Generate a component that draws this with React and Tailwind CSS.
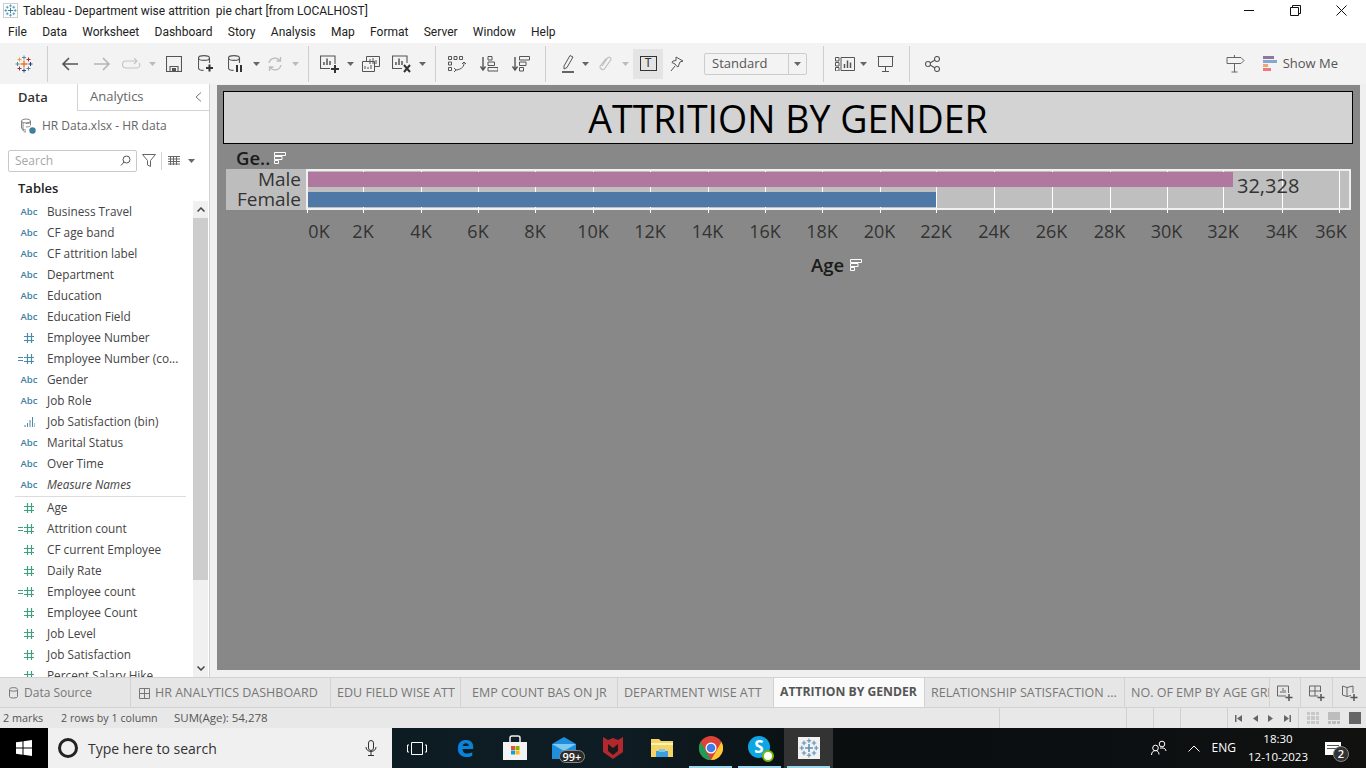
import React from "react";

const S = ({ w = 24, h = 24, vb, children, className = "", stroke = "#555", sw = 1.3, fill = "none" }) => (
  <svg width={w} height={h} viewBox={vb || `0 0 ${w} ${h}`} fill={fill} stroke={stroke} strokeWidth={sw} className={"block shrink-0 " + className}>{children}</svg>
);
const Sep = () => <div className="w-px h-[36px] bg-[#cfcfcf] shrink-0" />;
const Caret = ({ c = "#666" }) => <S w={7} h={4} stroke="none" fill={c}><path d="M0 0h7L3.500 4z" /></S>;
const Slot = ({ className, children }) => <div className={"flex items-center justify-center h-full shrink-0 " + className}>{children}</div>;

function Cross({ size = 16, c = "#5b8fb5", multi = false }) {
  const col = (a) => (multi ? a : c);
  const x = (cx, cy, r, color, k) => (
    <path key={k} d={`M${cx - r} ${cy}H${cx + r}M${cx} ${cy - r}V${cy + r}`} stroke={color} strokeWidth={r > 2 ? 1.4 : 1} fill="none" />
  );
  return (
    <svg width={size} height={size} viewBox="0 0 18 18" className="block shrink-0">
      {x(9, 9, 3.5, col("#e8762b"), 1)}
      {x(9, 2.5, 2, col("#5b879b"), 2)}
      {x(9, 15.5, 2, col("#1f4f7b"), 3)}
      {x(2.5, 9, 2, col("#59879b"), 4)}
      {x(15.5, 9, 2, col("#1f447c"), 5)}
      {x(4.5, 4.5, 2, col("#e8a33c"), 6)}
      {x(13.5, 4.5, 2, col("#c72035"), 7)}
      {x(4.5, 13.5, 2, col("#b0263d"), 8)}
      {x(13.5, 13.5, 2, col("#5a7d9a"), 9)}
    </svg>
  );
}

const menus = ["File", "Data", "Worksheet", "Dashboard", "Story", "Analysis", "Map", "Format", "Server", "Window", "Help"];

function Toolbar() {
  return (
    <div className="h-[41px] bg-[#f3f3f3] flex items-center shrink-0">
      <Slot className="w-[47px]"><Cross size={18} multi /></Slot>
      <Sep />
      <Slot className="ml-[6px] w-[32px]"><S w={18} h={16} stroke="#555" sw={1.6}><path d="M17 8H2M8 2L2 8l6 6" /></S></Slot>
      <Slot className="w-[32px]"><S w={18} h={16} stroke="#b5b5b5" sw={1.6}><path d="M1 8h15M10 2l6 6-6 6" /></S></Slot>
      <Slot className="w-[28px]"><S w={20} h={12} stroke="#c4c4c4" sw={1.1}><path d="M14 3H4a3 3 0 0 0 0 7h11a3 3 0 0 0 2-5M12 0l3 3-3 3" /></S></Slot>
      <Slot className="w-[12px]"><Caret c="#bbb" /></Slot>
      <Slot className="w-[32px]"><S w={16} h={16} sw={1.1}><path d="M.5.500h15v15H.5zM4 15.500v-5h8v5" /><path d="M6 12h4v3H6z" fill="#555" stroke="none" /></S></Slot>
      <Slot className="w-[31px]"><S w={16} h={18} sw={1.1}><ellipse cx="6" cy="3" rx="5.5" ry="2.4" /><path d="M.5 3v10c0 1.400 2 2.400 5 2.400M11.500 3v5" /><path d="M11.500 9.500v7M8 13h7" stroke="#333" strokeWidth="2" /></S></Slot>
      <Slot className="w-[30px]"><S w={16} h={18} sw={1.1}><ellipse cx="6" cy="3" rx="5.5" ry="2.4" /><path d="M.5 3v10c0 1.400 2 2.400 5 2.400M11.500 3v5" /><path d="M9 10v7M13 10v7" stroke="#333" strokeWidth="2" /></S></Slot>
      <Slot className="w-[10px]"><Caret /></Slot>
      <Slot className="w-[28px]"><S w={16} h={16} stroke="#bdbdbd" sw={1.3}><path d="M2 7a6 6 0 0 1 11-2M14 9a6 6 0 0 1-11 2M13.500 1v4h-4M2.500 15v-4h4" /></S></Slot>
      <Slot className="w-[12px]"><Caret c="#bbb" /></Slot>
      <div className="ml-[7px]"><Sep /></div>
      <Slot className="ml-[6px] w-[30px]"><S w={20} h={18} sw={1.1}><path d="M10 13.500H.5V1h14.500v8" /><path d="M4 10V7M7 10V3.500M10 10V6" strokeWidth="1.500" /><path d="M15 10v8M11 14h8" stroke="#333" strokeWidth="2" /></S></Slot>
      <Slot className="w-[10px]"><Caret /></Slot>
      <Slot className="w-[32px]"><S w={18} h={16} sw={1}><path d="M4.500 5V.5h13v10H13M.5 5.500h12v10H.5z" /><path d="M8 8V3M11 8V2M14 8V4M3 13v-3M6 13v-2M9 13V9" /></S></Slot>
      <Slot className="w-[30px]"><S w={20} h={18} sw={1.1}><path d="M10 13.500H.5V1h14.500v7" /><path d="M4 10V7M7 10V3.500M10 10V6" strokeWidth="1.500" /><path d="M12 10l6 7M18 10l-6 7" stroke="#333" strokeWidth="2" /></S></Slot>
      <Slot className="w-[10px]"><Caret /></Slot>
      <div className="ml-[8px]"><Sep /></div>
      <Slot className="ml-[5px] w-[32px]"><S w={18} h={16} sw={1}><path d="M.5.500h3v3h-3zM6 .5h3v3H6zM11.500.5h3v3h-3zM.5 6h3v3h-3zM.5 11.500h3v3h-3z" /><path d="M16 6c.5 4-2 7.500-8 8M6 12l2 2-2 2M14 8l2-2 2 2" /></S></Slot>
      <Slot className="w-[32px]"><S w={18} h={16} sw={1}><path d="M3 1v12M.5 10.500L3 14l2.500-3.500" strokeWidth="1.400" /><path d="M8 .5h4v3.500H8zM8 6h6.500v3.500H8zM8 11.500h10V15H8z" /></S></Slot>
      <Slot className="w-[32px]"><S w={18} h={16} sw={1}><path d="M3 1v12M.5 10.500L3 14l2.500-3.500" strokeWidth="1.400" /><path d="M7.500.5h10V4h-10zM7.500 6H14v3.500H7.500zM7.500 11.500h4V15h-4z" /></S></Slot>
      <div className="ml-[8px]"><Sep /></div>
      <Slot className="ml-[10px] w-[24px]"><S w={14} h={19} sw={1}><path d="M3 12L9 1.500l3 1.500-6 10.500-3 1.500z" /><path d="M1 18h12" stroke="#555" strokeWidth="1.800" /></S></Slot>
      <Slot className="w-[10px]"><Caret /></Slot>
      <Slot className="w-[30px]"><S w={13} h={18} stroke="#c0c0c0" sw={1.2}><path d="M3 11l6-8.500a2 2 0 0 1 3 2l-7 10a3 3 0 0 1-4-3l6-8" /></S></Slot>
      <Slot className="w-[10px]"><Caret c="#bbb" /></Slot>
      <Slot className="ml-[3px] w-[30px] !h-[30px] bg-[#e4e4e4]">
        <div className="w-[17px] h-[15px] border border-[#333] flex items-center justify-center font-['Liberation_Mono'] text-[12px] leading-none text-[#333]">T</div>
      </Slot>
      <Slot className="w-[28px]"><S w={14} h={16} sw={1}><path d="M6 1l7 4-3 1-2 5-1.500-1L5 8 2 6.500 3 5l3-.5zM5 10l-4 5" /></S></Slot>
      <div className="ml-[13px] w-[103px] h-[22px] border border-[#cccccc] rounded-[2px] flex items-center shrink-0">
        <div className="flex-1 pl-[7px] text-[13px] text-[#555]">Standard</div>
        <div className="w-[18px] h-full border-l border-[#cccccc] flex items-center justify-center"><Caret /></div>
      </div>
      <div className="ml-[16px]"><Sep /></div>
      <Slot className="ml-[8px] w-[26px]"><S w={20} h={14} sw={1}><path d="M.5.500h3.500v3.500H.5zM.5 5.500h3.500V9H.5zM.5 10.500h3.500V14H.5zM6 .5h13.500V13.500H6z" /><path d="M9.500 11V7M12.500 11V3.500M15.500 11V5.500" strokeWidth="1.500" /></S></Slot>
      <Slot className="w-[10px]"><Caret /></Slot>
      <Slot className="w-[34px]"><S w={17} h={16} sw={1}><path d="M.5.500h16M1.500.5v10h14V.5M8.500 10.500v5M5 15.500h7" /></S></Slot>
      <div className="ml-[7px]"><Sep /></div>
      <Slot className="ml-[6px] w-[32px]"><S w={15} h={16} sw={1.1}><circle cx="3" cy="8" r="2.500" /><circle cx="12" cy="3" r="2.500" /><circle cx="12" cy="13" r="2.500" /><path d="M5 7l5-3M5 9l5 3" /></S></Slot>
      <div className="ml-auto w-[24px] flex justify-center"><S w={19} h={19} stroke="#666" sw={1}><path d="M1 3.500h14l3 3-3 3H1zM8.500 1v2.500M8.500 9.500V18M5.500 18h6" /></S></div>
      <div className="ml-[15px] flex flex-col gap-px w-[14px] shrink-0">
        <div className="w-[11px] h-[3px] bg-[#8d77a0]" />
        <div className="w-[14px] h-[3px] bg-[#85a8cf]" />
        <div className="w-[5px] h-[3px] bg-[#f0a673]" />
        <div className="w-[8px] h-[3px] bg-[#f3757f]" />
      </div>
      <div className="ml-[6px] mr-[28px] text-[13px] text-[#555]">Show Me</div>
    </div>
  );
}

const Hash = ({ c }) => (
  <S w={10} h={10} stroke={c} sw={1.2}><path d="M3.500 0v10M7.500 0v10M0 3.500h10M0 7.500h10" /></S>
);
const Icon = ({ kind, measure }) => {
  const c = measure ? "#3fa07f" : "#4a8ba8";
  if (kind === "abc") return <span className="text-[9.5px] font-semibold text-[#3f7f9f] leading-none">Abc</span>;
  if (kind === "hash") return <Hash c={c} />;
  if (kind === "calc")
    return (
      <div className="flex items-center gap-px -ml-[6px]">
        <S w={5} h={4} stroke={c} sw={1}><path d="M0 .5h5M0 3.500h5" /></S>
        <Hash c={c} />
      </div>
    );
  return <S w={11} h={10} stroke="#4c8aa6" sw={1}><path d="M1 10V8M3.500 10V6M6 10V3M8.500 10V0M11 10V6" /></S>;
};

const dims = [
  ["abc", "Business Travel"], ["abc", "CF age band"], ["abc", "CF attrition label"], ["abc", "Department"],
  ["abc", "Education"], ["abc", "Education Field"], ["hash", "Employee Number"], ["calc", "Employee Number (co..."],
  ["abc", "Gender"], ["abc", "Job Role"], ["bin", "Job Satisfaction (bin)"], ["abc", "Marital Status"],
  ["abc", "Over Time"], ["abc", "Measure Names", true],
];
const meas = [
  ["hash", "Age"], ["calc", "Attrition count"], ["hash", "CF current Employee"], ["hash", "Daily Rate"],
  ["calc", "Employee count"], ["hash", "Employee Count"], ["hash", "Job Level"], ["hash", "Job Satisfaction"], ["hash", "Percent Salary Hike"],
];
const Row = ({ kind, label, italic, measure }) => (
  <div className="h-[21px] flex items-center shrink-0">
    <div className="w-[47px] pl-[11px] flex justify-center items-center shrink-0"><Icon kind={kind} measure={measure} /></div>
    <div className={"text-[11.8px] text-[#444] whitespace-nowrap " + (italic ? "italic" : "")}>{label}</div>
  </div>
);

function Sidebar() {
  return (
    <div className="w-[210px] shrink-0 bg-white border-r border-[#d0d0d0] flex flex-col overflow-hidden">
      <div className="h-[27px] flex shrink-0">
        <div className="w-[77px] pl-[18px] flex items-center text-[13px] font-semibold text-[#333]">Data</div>
        <div className="flex-1 border-l border-b border-[#d4d4d4] flex items-center pl-[12px] text-[13px] text-[#666]">
          Analytics
          <S w={7} h={10} stroke="#777" sw={1} className="ml-auto mr-[7px]"><path d="M6 .5L1 5l5 4.500" /></S>
        </div>
      </div>
      <div className="h-[29px] flex items-center pl-[20px] shrink-0">
        <S w={16} h={16} stroke="#777" sw={0.9}><ellipse cx="6" cy="3" rx="4.500" ry="2" /><path d="M1.500 3v7c0 1 2 2 4.500 2M10.500 3v4M3 5v7c0 1 1 2 3 2M6 5.500c2 0 4.500-.5 4.500-1.500M6 9c2 0 3-.5 4.500-1" /><circle cx="12.500" cy="12.500" r="3.200" fill="#3f7f9e" stroke="none" /></S>
        <span className="ml-[6px] text-[12px] text-[#666]">HR Data.xlsx - HR data</span>
      </div>
      <div className="mt-[10px] h-[21px] flex items-center pl-[8px] shrink-0">
        <div className="w-[129px] h-[22px] border border-[#c9c9c9] rounded-[2px] flex items-center pl-[6px] pr-[5px] text-[12px] text-[#a8a8a8]">
          Search
          <S w={11} h={11} stroke="#555" sw={1} className="ml-auto"><circle cx="6.500" cy="4.500" r="3.500" /><path d="M4 7L1 10.500" /></S>
        </div>
        <S w={14} h={13} stroke="#666" sw={1} className="ml-[5px]"><path d="M.5.500h13L8.500 6.500V12.500L5.500 11V6.500z" /></S>
        <div className="ml-[5px] w-px h-[18px] bg-[#d4d4d4]" />
        <S w={12} h={9} stroke="#666" sw={1} className="ml-[6px]"><path d="M0 .5h12M0 3h12M0 5.500h12M0 8h12M2.500 0v9M5.500 0v9M8.500 0v9" /></S>
        <div className="ml-[8px]"><Caret /></div>
      </div>
      <div className="mt-[7px] h-[20px] pl-[18px] pt-px flex items-center text-[13px] font-semibold text-[#222] shrink-0">Tables</div>
      <div className="flex-1 flex min-h-0 mt-[3px]">
        <div className="w-[193px] flex flex-col shrink-0 overflow-hidden">
          {dims.map(([k, l, it]) => <Row key={l} kind={k} label={l} italic={it} />)}
          <div className="h-[2px] ml-[15px] mr-[7px] border-b border-[#dcdcdc] shrink-0" />
          {meas.map(([k, l]) => <Row key={l} kind={k} label={l} measure />)}
        </div>
        <div className="w-[15px] bg-[#f0f0f0] flex flex-col shrink-0">
          <div className="h-[17px] flex items-center justify-center shrink-0"><S w={8} h={5} stroke="#444" sw={1.5}><path d="M.5 4.500L4 1l3.500 3.500" /></S></div>
          <div className="h-[362px] bg-[#cdcdcd] shrink-0" />
          <div className="mt-auto h-[17px] flex items-center justify-center"><S w={8} h={5} stroke="#444" sw={1.5}><path d="M.5.500L4 4l3.500-3.500" /></S></div>
        </div>
      </div>
    </div>
  );
}

const SortIcon = ({ c = "#fff" }) => (
  <S w={12} h={12} stroke={c} sw={1}><path d="M.5.500h11v3H.5zM.5 4.500h7.500v3H.5zM.5 8.500h4v3h-4z" /></S>
);

const ticks = [0.5, 57, 115, 172, 229, 287, 344, 401.5, 459, 516, 573.5, 630, 688, 745.5, 803.5, 860.5, 917, 975.5, 1032.5];
const labels = ticks.map((t, i) => ({ t: i === 0 ? 13 : i === 18 ? 1025 : t, s: `${i * 2}K` }));
const bars = [
  { v: 32328, c: "bg-[#b0779f]" },
  { v: 21950, c: "bg-[#4e79a7]" },
];

function Canvas() {
  return (
    <div className="w-[1143px] h-[585px] bg-[#888888] mt-px shrink-0 pl-[6px] pt-[6px] font-['Open_Sans']">
      <div className="w-[1130px] h-[53px] bg-[#d3d3d3] border border-black flex items-center justify-center text-[37.5px] leading-none text-black pt-[2px]">
        ATTRITION BY GENDER
      </div>
      <div className="h-[25px] pt-[3px] pl-[13px] flex items-center gap-[4px]">
        <span className="text-[18.5px] leading-[20px] font-semibold text-[#1a1a1a]">Ge..</span>
        <SortIcon />
      </div>
      <div className="flex ml-[3px]">
        <div className="w-[80px] h-[41px] bg-[#bdbdbd] flex flex-col items-end pr-[5px] text-[19px] leading-[20px] text-[#333] shrink-0">
          <div>Male</div>
          <div>Female</div>
        </div>
        <div className="relative w-[1045px] h-[41px] bg-[#bfbfbf] border-2 border-[#f0f0f0] pt-px flex flex-col gap-[5px]">
          {ticks.slice(1).map((t) => (
            <div key={t} className="absolute top-0 h-[37px] w-px bg-white" style={{ left: t - 2 }} />
          ))}
          {bars.map((b) => (
            <div key={b.v} className={"relative h-[15px] " + b.c} style={{ width: b.v * 0.0286 }} />
          ))}
          <div className="absolute left-[929px] top-[3px] text-[20px] leading-[24px] text-[#333]">32,328</div>
        </div>
      </div>
      <div className="relative ml-[83px] w-[1045px] h-[45px]">
        {ticks.map((t) => (
          <div key={t} className="absolute top-0 h-[3px] w-px bg-white" style={{ left: t }} />
        ))}
        {labels.map((l) => (
          <div key={l.s} className="absolute top-[9px] -translate-x-1/2 text-[18px] leading-[24px] text-[#333]" style={{ left: l.t }}>{l.s}</div>
        ))}
      </div>
      <div className="ml-[588px] flex items-center gap-[6px]">
        <span className="text-[18.5px] leading-[20px] font-semibold text-[#1a1a1a]">Age</span>
        <SortIcon />
      </div>
    </div>
  );
}

const tabs = [
  { l: "Data Source", w: "w-[131px]", pre: "db", pl: "pl-[9px] text-[12px] gap-[6px] pt-px" },
  { l: "HR ANALYTICS DASHBOARD", w: "w-[200px]", pre: "grid", pl: "pl-[8px] gap-[5px] pt-px" },
  { l: "EDU FIELD WISE ATT", w: "w-[130px]", pl: "pl-[6px] pt-px" },
  { l: "EMP COUNT BAS ON JR", w: "w-[157px]", pl: "pl-[11px] pt-px" },
  { l: "DEPARTMENT WISE ATT", w: "w-[156px]", pl: "pl-[6px] pt-px" },
  { l: "ATTRITION BY GENDER", w: "w-[151px]", pl: "pl-[6px]", active: true },
  { l: "RELATIONSHIP SATISFACTION ...", w: "w-[200px]", pl: "pl-[6px] pt-px" },
  { l: "NO. OF EMP BY AGE GRP", w: "w-[145px]", pl: "pl-[6px] pt-px" },
];

function Tabs() {
  return (
    <div className="h-[31px] bg-[#e6e6e6] border-y border-[#d2d2d2] flex shrink-0 text-[12.5px] text-[#777] font-['Open_Sans']">
      {tabs.map((t) => (
        <div key={t.l} className={`${t.w} ${t.pl} shrink-0 overflow-hidden whitespace-nowrap flex items-center border-r border-[#d2d2d2] ${t.active ? "bg-[#fafafa] font-bold text-[#555] !text-[12.2px]" : ""}`}>
          {t.pre === "db" && <S w={9} h={12} stroke="#777" sw={1}><path d="M.5 2.500v7c0 2 8 2 8 0v-7c0-2.500-8-2.500-8 0zM.5 3c0 1.500 8 1.500 8 0" /></S>}
          {t.pre === "grid" && <S w={11} h={11} stroke="#777" sw={1}><path d="M.5.500h10v10H.5zM5.500.5v10M.5 5.500h10" /></S>}
          {t.l}
        </div>
      ))}
      <Slot className="w-[31px] border-r border-[#d2d2d2]"><S w={16} h={16} stroke="#666" sw={1}><path d="M9 11H.5V1h11v7M4 8V6M6 8V3M8 8V5" /><path d="M12 9v7M8.500 12.500h7" stroke="#555" strokeWidth="1.500" /></S></Slot>
      <Slot className="w-[32px] border-r border-[#d2d2d2]"><S w={16} h={16} stroke="#666" sw={1}><path d="M9 11H.5V1h11v6M.5 6h11M6 1v10" /><path d="M12 9v7M8.500 12.500h7" stroke="#555" strokeWidth="1.500" /></S></Slot>
      <Slot className="flex-1"><S w={16} h={16} stroke="#666" sw={1}><path d="M.5 1L5 2.500 11 1v7M.5 1v9L5 11.500l4-1M5 2.500v9" /><path d="M12 9v7M8.500 12.500h7" stroke="#555" strokeWidth="1.500" /></S></Slot>
    </div>
  );
}

function Status() {
  const V = ({ className = "" }) => <div className={"h-full w-px bg-[#d0d0d0] shrink-0 " + className} />;
  return (
    <div className="h-[20px] bg-[#e8e8e8] flex items-center shrink-0 text-[11.5px] text-[#555] font-['Open_Sans']">
      <span className="pl-[3px] w-[61px] shrink-0 text-[10.8px]">2 marks</span>
      <span className="w-[113px] shrink-0 text-[10.7px]">2 rows by 1 column</span>
      <span className="w-[825px] shrink-0">SUM(Age): 54,278</span>
      <V />
      <V className="ml-[126px]" />
      <V className="ml-[26px]" />
      <V className="ml-[26px]" />
      <V className="ml-[46px]" />
      <div className="ml-[7px] w-[56px] flex items-center justify-between shrink-0">
        <S w={7} h={7} stroke="none" fill="#666"><path d="M0 0h1.500v7H0zM7 0v7L2 3.500z" /></S>
        <S w={5} h={7} stroke="none" fill="#666"><path d="M5 0v7L0 3.500z" /></S>
        <S w={5} h={7} stroke="none" fill="#666"><path d="M0 0v7l5-3.500z" /></S>
        <S w={7} h={7} stroke="none" fill="#666"><path d="M5.500 0H7v7H5.500zM0 0v7l5-3.500z" /></S>
      </div>
      <V className="ml-[7px]" />
      <div className="ml-[8px] w-[12px] h-[12px] grid grid-cols-3 gap-px shrink-0">
        {[0, 1, 2, 3, 4, 5, 6, 7, 8].map((i) => <div key={i} className="bg-[#c8c8c8]" />)}
      </div>
      <div className="ml-[9px] w-[12px] h-[12px] flex flex-col gap-px shrink-0">
        <div className="h-[8px] bg-[#bdbdbd]" />
        <div className="h-[3px] grid grid-cols-3 gap-px"><div className="bg-[#bdbdbd]" /><div className="bg-[#bdbdbd]" /><div className="bg-[#bdbdbd]" /></div>
      </div>
      <div className="ml-[9px] w-[12px] h-[12px] bg-[#666] shrink-0" />
    </div>
  );
}

const TaskItem = ({ children, line, active }) => (
  <div className={"relative w-[49px] h-full flex items-center justify-center shrink-0 " + (active ? "bg-[#333333]" : "")}>
    {children}
    {line && <div className="absolute bottom-0 left-[3px] right-[3px] h-[2px] bg-[#9cd6ec]" />}
  </div>
);

function Taskbar() {
  return (
    <div className="h-[40px] flex shrink-0 bg-[linear-gradient(90deg,#0a1a20_0%,#0e1d24_45%,#0a0e0f_62%,#0b0f12_78%,#111210_100%)] text-white font-['Open_Sans']">
      <div className="w-[48px] bg-black flex items-center justify-center shrink-0">
        <S w={16} h={16} stroke="none" fill="#fff"><path d="M0 2.300l6.500-.9v6.200H0zM7.500 1.300L16 0v7.600H7.500zM0 8.500h6.500v6.200L0 13.800zM7.500 8.500H16V16l-8.500-1.200z" /></S>
      </div>
      <div className="w-[344px] bg-[#f0f0f0] flex items-center shrink-0">
        <div className="ml-[10px] w-[20px] h-[20px] rounded-full border-[3px] border-[#222]" />
        <span className="ml-[10px] pt-px text-[14px] text-[#333]">Type here to search</span>
        <S w={12} h={16} stroke="#333" sw={1} className="ml-auto mr-[15px]"><path d="M3.500 3a2.500 2.500 0 0 1 5 0v5a2.500 2.500 0 0 1-5 0zM1 7c0 6 10 6 10 0M6 12v3.500M3 15.500h6" /></S>
      </div>
      <TaskItem><S w={20} h={13} stroke="#fff" sw={1}><path d="M4.500.5h11v12h-11zM2 3H.5v7H2M18 3h1.500v7H18" /></S></TaskItem>
      <TaskItem><span className="text-[30px] font-bold leading-none text-[#0a84d8] -mt-[5px]">e</span></TaskItem>
      <TaskItem>
        <svg width="24" height="26" viewBox="0 0 24 26" className="block"><path d="M7 7V3a2 2 0 0 1 2-2h6a2 2 0 0 1 2 2v4" fill="none" stroke="#eee" strokeWidth="1.500" /><path d="M0 7h24v18H0z" fill="#f3f3f3" /><path d="M8 11h4v4H8z" fill="#e8502f" /><path d="M12.500 11h4v4h-4z" fill="#7eb900" /><path d="M8 15.500h4v4H8z" fill="#0a9fe8" /><path d="M12.500 15.500h4v4h-4z" fill="#ffb900" /></svg>
      </TaskItem>
      <TaskItem>
        <div className="relative">
          <svg width="24" height="22" viewBox="0 0 24 22" className="block"><path d="M0 7L12 0l12 7v15H0z" fill="#1d8fdc" /><path d="M0 7l12 7 12-7" fill="#7dcaf2" /></svg>
          <div className="absolute -bottom-[4px] left-[7px] h-[13px] px-[3px] rounded-full bg-[#2b2b2b] border border-[#888] text-[11px] leading-[11px] font-semibold whitespace-nowrap">99+</div>
        </div>
      </TaskItem>
      <TaskItem>
        <svg width="22" height="24" viewBox="0 0 22 24" className="block"><path d="M1 1l5 3 5-2 5 2 5-3v15l-10 7L1 16z" fill="#b3282d" /><path d="M6 8l5 4 5-4v7l-5 4-5-4z" fill="#1a1a1a" /></svg>
      </TaskItem>
      <TaskItem>
        <svg width="22" height="18" viewBox="0 0 22 18" className="block"><path d="M0 0h8l2 2h12v16H0z" fill="#f6d365" /><path d="M0 4h22v2H0z" fill="#fff2b8" /><path d="M5 12h12v6H5z" fill="#3aa0e0" /><path d="M8 10h6v3H8z" fill="#7cc6f0" /></svg>
      </TaskItem>
      <TaskItem line>
        <svg width="24" height="24" viewBox="0 0 24 24" className="block"><circle cx="12" cy="12" r="12" fill="#dd4437" /><path d="M12 24A12 12 0 0 1 1.600 6L7 15.500z" fill="#1e9e54" /><path d="M12 24l5.300-9L22.400 6A12 12 0 0 1 12 24z" fill="#fcc934" /><circle cx="12" cy="12" r="5.500" fill="#fff" /><circle cx="12" cy="12" r="4.300" fill="#3f7de8" /></svg>
      </TaskItem>
      <TaskItem line>
        <div className="relative">
          <svg width="24" height="24" viewBox="0 0 24 24" className="block"><circle cx="11" cy="11" r="11" fill="#0ea5e4" /><text x="11" y="17" textAnchor="middle" fontSize="17" fontWeight="700" fill="#fff" fontFamily="Open Sans">S</text></svg>
          <div className="absolute -bottom-[2px] -right-[2px] w-[12px] h-[12px] rounded-full bg-white border-2 border-[#76b900]" />
        </div>
      </TaskItem>
      <TaskItem line active>
        <div className="w-[22px] h-[22px] bg-[#f2f2f2] flex items-center justify-center"><Cross size={20} /></div>
      </TaskItem>
      <div className="ml-auto flex items-center shrink-0">
        <S w={16} h={16} stroke="#fff" sw={1}><circle cx="4.500" cy="8" r="2.800" /><circle cx="11" cy="4" r="2.800" /><path d="M.5 15c0-3 2-4.500 4-4.500s3.500 1.500 3.500 4M9 8h3c1.500 0 3 1.500 3 3" /></S>
        <S w={12} h={7} stroke="#fff" sw={1} className="ml-[21px]"><path d="M.5 6.500L6 1l5.500 5.500" /></S>
        <span className="ml-[12px] text-[12px]">ENG</span>
        <div className="ml-[13px] w-[58px] flex flex-col items-center text-[11.5px] leading-[18px] -mt-px">
          <div>18:30</div>
          <div className="whitespace-nowrap">12-10-2023</div>
        </div>
        <div className="ml-[18px] mr-[25px] relative w-[16px] h-[13px] bg-white flex flex-col gap-[2px] px-[2px] pt-[3px]">
          <div className="h-px bg-[#555]" />
          <div className="h-px bg-[#555]" />
          <div className="absolute bottom-[-7px] right-[-8px] w-[16px] h-[16px] rounded-full bg-[#333] border border-[#888] text-[11px] leading-[14px] text-center font-semibold">2</div>
        </div>
      </div>
    </div>
  );
}

export default function App() {
  return (
    <div className="w-[1366px] h-[768px] overflow-hidden flex flex-col bg-white font-['Open_Sans']">
      <div className="h-[21px] flex items-center shrink-0">
        <div className="ml-[3px] w-[15px] h-[15px] border border-[#ccc] flex items-center justify-center"><Cross size={13} c="#3d86a8" /></div>
        <div className="ml-[5px] font-['Roboto'] text-[12px] text-[#222] whitespace-pre">Tableau - Department wise attrition  pie chart [from LOCALHOST]</div>
        <div className="ml-auto flex h-full items-center">
          <Slot className="w-[46px]"><S w={10} h={2} stroke="#111" sw={1}><path d="M0 .5h10" /></S></Slot>
          <Slot className="w-[46px]"><S w={11} h={11} stroke="#111" sw={1}><path d="M.5 2.500h8v8h-8zM2.500 2.500v-2h8v8h-2" /></S></Slot>
          <Slot className="w-[46px] mr-[2px]"><S w={11} h={11} stroke="#111" sw={1}><path d="M.5.500l10 10M10.500.5l-10 10" /></S></Slot>
        </div>
      </div>
      <div className="h-[22px] flex items-center pl-[8px] gap-[15.3px] font-['Roboto'] text-[12px] text-[#222] shrink-0">
        {menus.map((m) => <span key={m}>{m}</span>)}
      </div>
      <Toolbar />
      <div className="flex-1 flex min-h-0 bg-[#f0f0f0]">
        <Sidebar />
        <div className="w-[7px] shrink-0" />
        <Canvas />
      </div>
      <Tabs />
      <Status />
      <Taskbar />
    </div>
  );
}
